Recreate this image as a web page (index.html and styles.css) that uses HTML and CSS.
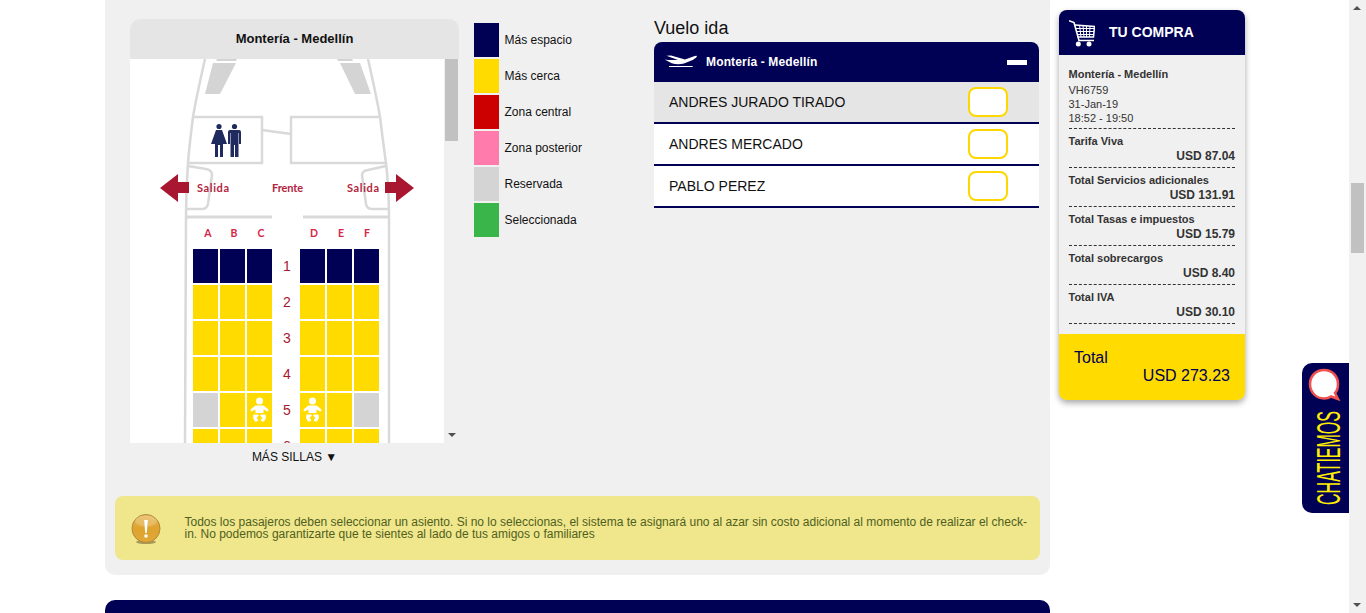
FILE: index.html
```html
<!DOCTYPE html>
<html lang="es">
  <head>
    <meta charset="UTF-8" />
    <meta name="viewport" content="width=device-width, initial-scale=1.0" />
    <title>Selección de asientos</title>
    <link rel="stylesheet" href="styles.css">
  </head>
  <body>
    <div class="page">
      <div class="columns">
        <main class="mainCol">
          <section class="panel">
            <div class="topRow">
              <!-- Seat map -->
              <div class="seatCol">
                <div class="seatHead">Montería - Medellín</div>
                <div class="seatBox">
                  <div class="seatMap">
                    <svg class="plane" width="314" height="384" viewBox="0 0 314 384">
                      <g fill="none" stroke="#d9d9d9" stroke-width="2.5">
                        <path d="M75 0 Q66 40 63 58 Q59 90 58 104 Q56 130 56 158 L55 384" />
                        <path d="M238 0 Q247 40 250 58 Q254 90 256 104 Q259 130 259 158 L259 384" />
                        <path d="M63 58 H132 V104 H58" />
                        <path d="M250 58 H161 V104 H256" />
                        <path d="M132 71 L161 75" />
                        <path d="M58 107 L76 110 Q82 111 82 116 L78 145 Q77 150 72 150 H57" />
                        <path d="M256 107 L238 111 Q232 112 232 116 L236 145 Q237 150 242 150 H258" />
                        <path d="M56 158 H142 M173 158 H259" stroke-width="3" />
                      </g>
                      <g fill="#d4d4d4">
                        <path d="M87 0 H107 L106 2 H86 Z" />
                        <path d="M83 4 H106 L90 35 H75 Z" />
                        <path d="M207 0 H222 L223 2 H208 Z" />
                        <path d="M210 4 H230 L241 35 H225 Z" />
                      </g>
                      <!-- restroom signs -->
                      <g fill="#1f2a5e">
                        <circle cx="89" cy="67.5" r="2.6" />
                        <path d="M86 71 H92 L97 85 H93 V98 H90 V86 H88 V98 H85 V85 H81 Z" />
                        <circle cx="104.500" cy="67.500" r="2.600" />
                        <path d="M100 71 H109 Q111 71 111 73 V85 H109 V74 H108.500 V98 H105 V86 H104 V98 H100.500 V74 H100 V85 H98 V73 Q98 71 100 71 Z" />
                      </g>
                      <g fill="#a8172f">
                        <path d="M30 129 L48 115 V123 H59 V134 H48 V143 Z" />
                        <path d="M284 129 L266 115 V123 H255 V134 H266 V143 Z" />
                      </g>
                      <g class="planeLabel">
                        <text x="67" y="133" textLength="32">Salida</text>
                        <text x="142" y="133" textLength="31">Frente</text>
                        <text x="217" y="133" textLength="32">Salida</text>
                      </g>
                      <g class="planeLetter">
                        <text x="78" y="178">A</text>
                        <text x="104" y="178">B</text>
                        <text x="131" y="178">C</text>
                        <text x="184" y="178">D</text>
                        <text x="211" y="178">E</text>
                        <text x="237" y="178">F</text>
                      </g>
                    </svg>

                    <div class="seatGrid">
                      <div class="seat navy"></div><div class="seat navy"></div><div class="seat navy"></div>
                      <div class="rowNum">1</div>
                      <div class="seat navy"></div><div class="seat navy"></div><div class="seat navy"></div>

                      <div class="seat yellow"></div><div class="seat yellow"></div><div class="seat yellow"></div>
                      <div class="rowNum">2</div>
                      <div class="seat yellow"></div><div class="seat yellow"></div><div class="seat yellow"></div>

                      <div class="seat yellow"></div><div class="seat yellow"></div><div class="seat yellow"></div>
                      <div class="rowNum">3</div>
                      <div class="seat yellow"></div><div class="seat yellow"></div><div class="seat yellow"></div>

                      <div class="seat yellow"></div><div class="seat yellow"></div><div class="seat yellow"></div>
                      <div class="rowNum">4</div>
                      <div class="seat yellow"></div><div class="seat yellow"></div><div class="seat yellow"></div>

                      <div class="seat grey"></div>
                      <div class="seat yellow"></div>
                      <div class="seat yellow">
                        <svg width="25" height="34" viewBox="0 0 25 34"><use href="#baby" /></svg>
                      </div>
                      <div class="rowNum">5</div>
                      <div class="seat yellow">
                        <svg width="25" height="34" viewBox="0 0 25 34"><use href="#baby" /></svg>
                      </div>
                      <div class="seat yellow"></div>
                      <div class="seat grey"></div>

                      <div class="seat yellow"></div><div class="seat yellow"></div><div class="seat yellow"></div>
                      <div class="rowNum">6</div>
                      <div class="seat yellow"></div><div class="seat yellow"></div><div class="seat yellow"></div>
                    </div>
                  </div>
                  <div class="mapScroll">
                    <div class="mapThumb"></div>
                    <div class="arrowDown"></div>
                  </div>
                </div>
                <div class="moreSeats">MÁS SILLAS ▼</div>
              </div>

              <!-- Legend -->
              <ul class="legend">
                <li><span class="swatch navy"></span>Más espacio</li>
                <li><span class="swatch yellow"></span>Más cerca</li>
                <li><span class="swatch red"></span>Zona central</li>
                <li><span class="swatch pink"></span>Zona posterior</li>
                <li><span class="swatch grey"></span>Reservada</li>
                <li><span class="swatch green"></span>Seleccionada</li>
              </ul>

              <!-- Passengers -->
              <div class="flight">
                <h3>Vuelo ida</h3>
                <div class="flightHead">
                  <svg class="planeIcon" width="34" height="14" viewBox="0 0 34 14">
                    <path fill="#fff" d="M0.700 4.500 L4 5 L14 5 L2.500 0.800 L7 0.500 L21 4.500 L28 2 Q33 0 33 1 Q33 2.500 28.700 5 L20 8.500 Q14 10 7.700 8.300 Z" />
                    <path stroke="#fff" stroke-width="1" d="M5 11.500 H28.700" />
                  </svg>
                  <span class="flightName">Montería - Medellín</span>
                  <span class="minus"></span>
                </div>
                <div class="passenger active">
                  <span>ANDRES JURADO TIRADO</span>
                  <span class="seatInput"></span>
                </div>
                <div class="passenger">
                  <span>ANDRES MERCADO</span>
                  <span class="seatInput"></span>
                </div>
                <div class="passenger">
                  <span>PABLO PEREZ</span>
                  <span class="seatInput"></span>
                </div>
              </div>
            </div>

            <div class="notice">
              <svg class="noticeIcon" width="30" height="30" viewBox="0 0 30 30">
                <defs>
                  <linearGradient id="coin" x1="0" y1="0" x2="0" y2="1">
                    <stop offset="0" stop-color="#e8b95a" />
                    <stop offset="0.5" stop-color="#dfa32e" />
                    <stop offset="1" stop-color="#e0a838" />
                  </linearGradient>
                </defs>
                <ellipse cx="15" cy="28" rx="10" ry="2" fill="#a89a5a" />
                <circle cx="15" cy="14.500" r="14" fill="url(#coin)" stroke="#b08a3a" />
                <ellipse cx="15" cy="7" rx="11" ry="5.500" fill="#fff" opacity="0.2" />
                <path fill="#fff" d="M13.200 6 H16.800 L15.800 19 H14.200 Z" />
                <circle cx="15" cy="22" r="1.800" fill="#fff" />
              </svg>
              <p>Todos los pasajeros deben seleccionar un asiento. Si no lo seleccionas, el sistema te asignará uno al azar sin costo adicional al momento de realizar el check-in. No podemos garantizarte que te sientes al lado de tus amigos o familiares</p>
            </div>
          </section>
          <div class="nextBar"></div>
        </main>

        <!-- Purchase summary -->
        <aside class="summary">
          <div class="summaryHead">
            <svg width="26" height="28" viewBox="0 0 26 28">
              <g fill="none" stroke="#fff">
                <path stroke-width="1.600" d="M0 1.700 L5 3.500 L10 21.500 H25" />
                <path stroke-width="1.500" d="M6 6 L25.500 7.500 L24.500 18 H8.500" />
                <path stroke-width="1" d="M7 9.500 H25 M8 12.500 H25 M8.500 15.500 H24.500 M10.500 6 L12 18 M14 6.500 L15 18 M17.500 7 V18 M21 7 L20.500 18" />
              </g>
              <circle cx="9.300" cy="25" r="2.500" fill="#fff" />
              <circle cx="20" cy="25" r="2.500" fill="#fff" />
            </svg>
            <span>TU COMPRA</span>
          </div>
          <div class="summaryBody">
            <div class="trip">
              <strong>Montería - Medellín</strong>
              <div>VH6759</div>
              <div>31-Jan-19</div>
              <div>18:52 - 19:50</div>
            </div>
            <div class="charge"><strong>Tarifa Viva</strong><b>USD 87.04</b></div>
            <div class="charge"><strong>Total Servicios adicionales</strong><b>USD 131.91</b></div>
            <div class="charge"><strong>Total Tasas e impuestos</strong><b>USD 15.79</b></div>
            <div class="charge"><strong>Total sobrecargos</strong><b>USD 8.40</b></div>
            <div class="charge"><strong>Total IVA</strong><b>USD 30.10</b></div>
          </div>
          <div class="summaryTotal">
            <div>Total</div>
            <div class="totalValue">USD 273.23</div>
          </div>
        </aside>
      </div>

      <!-- Chat tab, sits over the page edge -->
      <div class="chatTab">
        <svg width="47" height="150" viewBox="0 0 47 150">
          <path fill="#fff" stroke="#f0514f" stroke-width="2.500" d="M22 7 C30 7 36 13 36 21 C36 25 35 28 33 30 L36 36 L29 33.500 C27 35 24.500 35.500 22 35.500 C14 35.500 8 29 8 21 C8 13 14 7 22 7 Z" />
          <text class="chatText" transform="translate(38 142) rotate(-90)" textLength="94" lengthAdjust="spacingAndGlyphs">CHATIEMOS</text>
        </svg>
      </div>

      <div class="pageScroll">
        <div class="arrowUp"></div>
        <div class="pageThumb"></div>
        <div class="arrowDown"></div>
      </div>
    </div>

    <svg class="defs" width="0" height="0">
      <defs>
        <g id="baby" fill="#fff">
          <circle cx="12.500" cy="8" r="3.500" />
          <path d="M8.500 12.500 H16.500 L21 16 L21.500 18 L20.500 18.500 L16.500 16.500 V20 H8.500 V16.500 L4.500 18.500 L3.500 18 L4 16 Z" />
          <path d="M6.500 21.500 H11 L12 22.500 L9.500 25 L11.500 27 L10 28.500 H8 L6 25 Z" />
          <path d="M18.500 21.500 H14 L13 22.500 L15.500 25 L13.500 27 L15 28.500 H17 L19 25 Z" />
        </g>
      </defs>
    </svg>
  </body>
</html>
```

FILE: styles.css
```css
/* Reset some default styles */
* {
  margin: 0;
  padding: 0;
  box-sizing: border-box;
}

html,
body {
  height: 100%;
  overflow: hidden;
}

body {
  font-family: "Liberation Sans", Arial, sans-serif;
  font-size: 12px;
  color: #111;
  background-color: #fff;
}

.page {
  position: relative;
  display: flex;
  height: 613px;
  overflow: hidden;
}

.columns {
  flex: 1;
  display: flex;
  gap: 9px;
  padding-left: 105px;
  align-items: flex-start;
}

.mainCol {
  width: 945px;
}

.defs {
  position: absolute;
}

/* Shared colours */
.navy {
  background-color: #000055;
}

.yellow {
  background-color: #ffdb00;
}

.red {
  background-color: #cc0000;
}

.pink {
  background-color: #ff7bac;
}

.grey {
  background-color: #d4d4d4;
}

.green {
  background-color: #39b54a;
}

/* Main panel */
.panel {
  height: 575px;
  padding: 19px 10px 0;
  background-color: #f0f0f0;
  border-radius: 0 0 10px 10px;
}

.topRow {
  display: flex;
  height: 477px;
  padding-left: 15px;
}

.nextBar {
  height: 30px;
  margin-top: 25px;
  background-color: #000055;
  border-radius: 10px 10px 0 0;
}

/* Seat map */
.seatCol {
  width: 329px;
}

.seatHead {
  height: 40px;
  line-height: 40px;
  text-align: center;
  font-size: 13px;
  font-weight: bold;
  background-color: #e5e5e5;
  border-radius: 10px 10px 0 0;
}

.seatBox {
  display: flex;
  height: 384px;
}

.seatMap {
  position: relative;
  width: 314px;
  height: 384px;
  overflow: hidden;
  background-color: #fff;
  padding: 190px 0 0 63px;
}

.plane {
  position: absolute;
  top: 0;
  left: 0;
}

.planeLabel {
  font-size: 11px;
  font-weight: bold;
  fill: #b32440;
  font-family: "Lato", "Liberation Sans", sans-serif;
}

.planeLetter {
  font-size: 10.5px;
  font-weight: bold;
  fill: #d6264a;
  text-anchor: middle;
  font-family: "Lato", "Liberation Sans", sans-serif;
}

.seatGrid {
  position: relative;
  display: grid;
  grid-template-columns: 25px 25px 25px 24px 25px 25px 25px;
  grid-auto-rows: 34px;
  gap: 2px;
}

.seat svg {
  display: block;
}

.rowNum {
  display: flex;
  align-items: center;
  justify-content: center;
  padding-left: 2px;
  font-size: 14px;
  color: #a8172f;
}

.mapScroll {
  position: relative;
  width: 15px;
  padding-left: 1px;
}

.mapThumb {
  width: 13px;
  height: 82px;
  background-color: #c1c1c1;
}

.arrowDown {
  position: absolute;
  left: 4px;
  bottom: 6px;
  border-left: 4px solid transparent;
  border-right: 4px solid transparent;
  border-top: 4px solid #505050;
}

.moreSeats {
  margin-top: 7px;
  width: 329px;
  text-align: center;
  line-height: 14px;
}

/* Legend */
.legend {
  width: 180px;
  margin: 4px 0 0 15px;
  list-style: none;
}

.legend li {
  display: flex;
  align-items: center;
  gap: 5.5px;
  height: 34px;
  margin-bottom: 2px;
}

.swatch {
  width: 25px;
  height: 34px;
}

/* Passenger list */
.flight {
  width: 385px;
}

.flight h3 {
  height: 23px;
  font-size: 18px;
  font-weight: normal;
  line-height: 18px;
}

.flightHead {
  display: flex;
  align-items: center;
  height: 40px;
  padding: 0 12px 0 10px;
  color: #fff;
  background-color: #000055;
  border-radius: 8px 8px 0 0;
}

.flightName {
  flex: 1;
  margin-left: 8px;
  font-weight: bold;
  letter-spacing: 0.15px;
}

.minus {
  width: 20px;
  height: 5px;
  background-color: #fff;
}

.passenger {
  display: flex;
  align-items: center;
  justify-content: space-between;
  height: 42px;
  padding: 0 31px 0 15px;
  font-size: 14px;
  background-color: #fff;
  border-bottom: 2px solid #000055;
}

.passenger.active {
  background-color: #e5e5e5;
}

.seatInput {
  width: 40px;
  height: 30px;
  background-color: #fff;
  border: 2px solid #ffd700;
  border-radius: 8px;
}

/* Warning box */
.notice {
  display: flex;
  align-items: center;
  gap: 23.5px;
  height: 64px;
  padding: 0 12px 0 16px;
  background-color: #f0e68c;
  border-radius: 8px;
}

.noticeIcon {
  flex-shrink: 0;
  margin-top: 2px;
}

.notice p {
  line-height: 12px;
  color: #4f5f20;
}

/* Purchase summary */
.summary {
  width: 186px;
  height: 390px;
  margin-top: 10px;
  display: flex;
  flex-direction: column;
  background-color: #f0f0f0;
  border-radius: 8px;
  box-shadow: 0 3px 6px rgba(0, 0, 0, 0.35);
}

.summaryHead {
  display: flex;
  align-items: center;
  gap: 14px;
  height: 45px;
  padding-left: 10px;
  color: #fff;
  font-size: 14px;
  font-weight: bold;
  background-color: #000055;
  border-radius: 8px 8px 0 0;
}

.summaryHead span {
  margin-top: -2px;
}

.summaryBody {
  flex: 1;
  padding: 12px 10px 0 9.5px;
  font-size: 11px;
  color: #333;
}

.trip {
  height: 62px;
  line-height: 14px;
  border-bottom: 1px dashed #333;
}

.trip strong {
  display: block;
  margin-bottom: 2px;
}

.charge {
  height: 39px;
  padding-top: 5px;
  line-height: 14px;
  border-bottom: 1px dashed #333;
}

.charge strong {
  display: block;
  margin-bottom: 1px;
}

.charge b {
  display: block;
  text-align: right;
  font-size: 12px;
}

.summaryTotal {
  height: 66px;
  padding: 15px 15px 0;
  font-size: 16px;
  line-height: 18px;
  color: #000055;
  background-color: #ffdb00;
  border-radius: 0 0 8px 8px;
}

.totalValue {
  text-align: right;
}

/* Chat tab */
.chatTab {
  position: absolute;
  top: 363px;
  right: 17px;
  width: 47px;
  height: 150px;
  background-color: #000055;
  border-radius: 10px 0 0 10px;
}

.chatTab svg {
  display: block;
}

.chatText {
  font-size: 34px;
  fill: #ffee00;
}

/* Browser scrollbar */
.pageScroll {
  position: relative;
  width: 17px;
  background-color: #f1f1f1;
}

.arrowUp {
  position: absolute;
  top: 6px;
  left: 4px;
  border-left: 4px solid transparent;
  border-right: 4px solid transparent;
  border-bottom: 4px solid #505050;
}

.pageThumb {
  width: 13px;
  height: 70px;
  margin: 183px 0 0 2px;
  background-color: #c1c1c1;
}
```
